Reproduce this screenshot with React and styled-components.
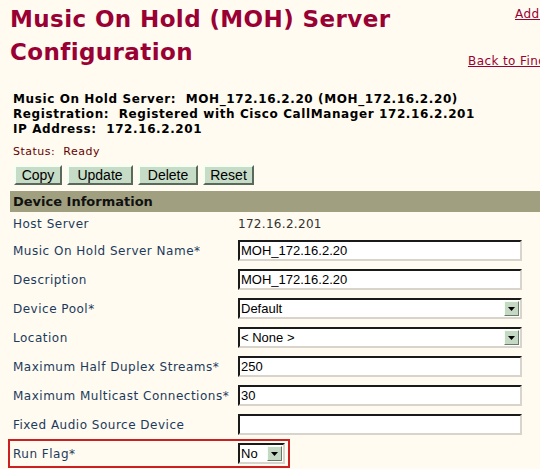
import styled, { createGlobalStyle } from "styled-components";

const Global = createGlobalStyle`
  html, body {
    margin: 0;
    padding: 0;
    background: #fffbf0;
    overflow: hidden;
  }
  body {
    font-family: "DejaVu Sans", Verdana, sans-serif;
  }
`;

const Page = styled.div`
  width: 540px;
  height: 469px;
  overflow: hidden;
  white-space: nowrap;
`;

const Header = styled.div`
  display: flex;
  height: 92px;
`;

const Title = styled.h1`
  margin: 0;
  padding: 3px 0 0 10px;
  width: 468px;
  flex-shrink: 0;
  box-sizing: border-box;
  font-size: 23px;
  letter-spacing: 0.4px;
  line-height: 33px;
  font-weight: bold;
  color: #990033;
  white-space: normal;
`;

const Links = styled.div`
  display: flex;
  flex-direction: column;
  padding-top: 7px;
  gap: 33px;
`;

const Link = styled.a`
  color: #990033;
  font-size: 12px;
  letter-spacing: 0.4px;
  text-decoration: underline;
  padding-left: ${(p) => p.$indent || 0}px;
`;

const Info = styled.div`
  padding-left: 13px;
  font-size: 12px;
  font-weight: bold;
  letter-spacing: 0.6px;
  line-height: 15px;
  color: #000;
`;

const Status = styled.div`
  padding: 8px 0 0 13px;
  font-size: 11px;
  letter-spacing: 0.5px;
  line-height: 14px;
  color: #660000;
`;

const Toolbar = styled.div`
  display: flex;
  gap: 5px;
  padding: 6px 0 0 14px;
  height: 20px;
`;

const Button = styled.button`
  font-family: "Liberation Sans", Arial, sans-serif;
  font-size: 14px;
  background: #c6dcc6;
  color: #000;
  padding: 0;
  width: ${(p) => p.$w}px;
  height: 20px;
  border: 2px solid;
  border-color: #f4fff4 #5a6a5a #5a6a5a #f4fff4;
`;

const SectionBar = styled.div`
  margin: 6px 0 0 10px;
  background: #a0a080;
  height: 21px;
  padding-left: 3px;
  font-size: 13px;
  font-weight: bold;
  line-height: 21px;
  color: #111;
`;

const Form = styled.div`
  display: flex;
  flex-direction: column;
  padding-left: 8px;
`;

const Row = styled.div`
  display: inline-grid;
  grid-template-columns: 225px auto;
  align-items: center;
  height: ${(p) => p.$h || 29}px;
  box-sizing: border-box;
  border: 2px solid ${(p) => (p.$flag ? "#cc2020" : "transparent")};
  padding-left: 3px;
  width: ${(p) => (p.$flag ? "282px" : "auto")};
`;

const Label = styled.span`
  font-size: 12px;
  letter-spacing: 0.5px;
  color: #1c3a5c;
`;

const Value = styled.span`
  font-size: 12px;
  letter-spacing: 0.3px;
  color: #333;
`;

const Field = styled.div`
  width: ${(p) => p.$w || 284}px;
  height: 21px;
  box-sizing: border-box;
  background: #fff;
  border: 2px solid;
  border-color: #1a1a1a #d8d4cc #d8d4cc #1a1a1a;
  display: flex;
  align-items: center;
  font-family: "Liberation Sans", Arial, sans-serif;
  font-size: 13px;
  color: #000;
  padding-left: 1px;
`;

const FieldText = styled.span`
  flex: 1;
`;

const Arrow = styled.span`
  width: 15px;
  height: 15px;
  margin-right: 1px;
  box-sizing: border-box;
  background: #c4d8c4;
  border: 1px solid;
  border-color: #f4fff4 #6a7a6a #6a7a6a #f4fff4;
  display: flex;
  align-items: center;
  justify-content: center;
`;

const Select = ({ value, w }) => (
  <Field $w={w}>
    <FieldText>{value}</FieldText>
    <Arrow>
      <svg width="7" height="4" viewBox="0 0 7 4">
        <path d="M0 0h7L3.5 4z" fill="#000" />
      </svg>
    </Arrow>
  </Field>
);

const rows = [
  { label: "Music On Hold Server Name*", input: "MOH_172.16.2.20" },
  { label: "Description", input: "MOH_172.16.2.20" },
  { label: "Device Pool*", select: "Default" },
  { label: "Location", select: "< None >" },
  { label: "Maximum Half Duplex Streams*", input: "250" },
  { label: "Maximum Multicast Connections*", input: "30" },
  { label: "Fixed Audio Source Device", input: "" },
];

const buttons = [
  ["Copy", 48],
  ["Update", 66],
  ["Delete", 60],
  ["Reset", 51],
];

export default function App() {
  return (
    <Page>
      <Global />
      <Header>
        <Title>Music On Hold (MOH) Server Configuration</Title>
        <Links>
          <Link href="#" $indent={47}>Add a New MOH Server</Link>
          <Link href="#">Back to Find/List MOH Servers</Link>
        </Links>
      </Header>
      <Info>
        <div>Music On Hold Server:&nbsp; MOH_172.16.2.20 (MOH_172.16.2.20)</div>
        <div>Registration:&nbsp; Registered with Cisco CallManager 172.16.2.201</div>
        <div>IP Address:&nbsp; 172.16.2.201</div>
      </Info>
      <Status>Status:&nbsp; Ready</Status>
      <Toolbar>
        {buttons.map(([t, w]) => (
          <Button key={t} $w={w}>{t}</Button>
        ))}
      </Toolbar>
      <SectionBar>Device Information</SectionBar>
      <Form>
        <Row $h={24}>
          <Label>Host Server</Label>
          <Value>172.16.2.201</Value>
        </Row>
        {rows.map((r) => (
          <Row key={r.label}>
            <Label>{r.label}</Label>
            {r.select ? (
              <Select value={r.select} />
            ) : (
              <Field>
                <FieldText>{r.input}</FieldText>
              </Field>
            )}
          </Row>
        ))}
        <Row $flag>
          <Label>Run Flag*</Label>
          <Select value="No" w={47} />
        </Row>
      </Form>
    </Page>
  );
}
